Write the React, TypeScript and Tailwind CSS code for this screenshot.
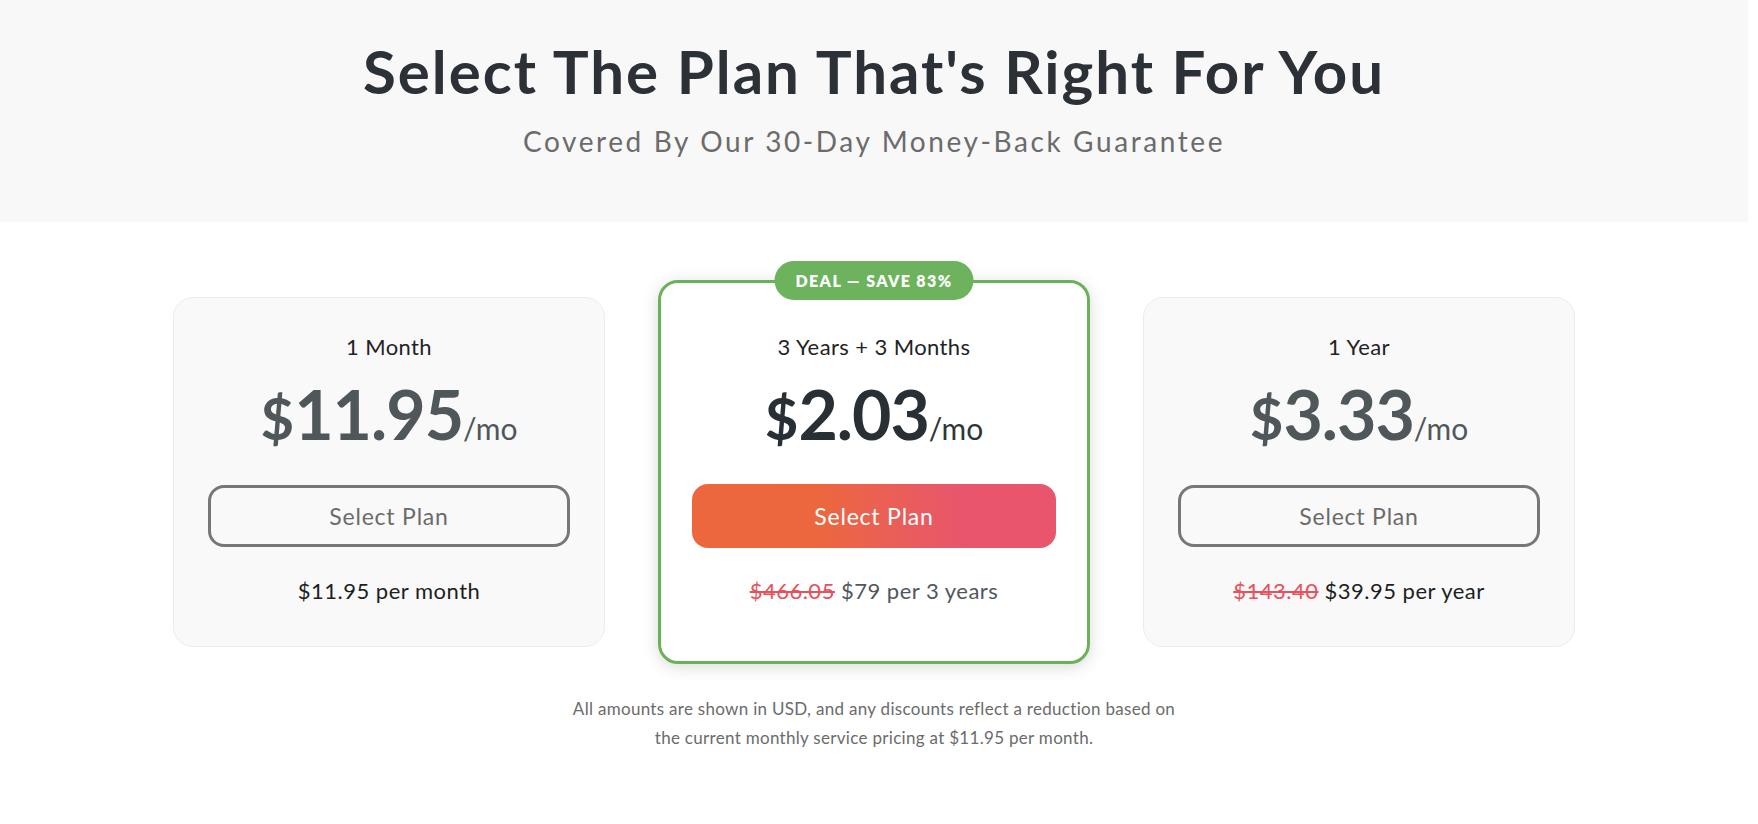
const plans = [
  { id: "1m", label: "1 Month", price: "11.95", old: null, billed: "$11.95 per month", featured: false },
  { id: "3y", label: "3 Years + 3 Months", price: "2.03", old: "$466.05", billed: "$79 per 3 years", featured: true },
  { id: "1y", label: "1 Year", price: "3.33", old: "$143.40", billed: "$39.95 per year", featured: false },
]

type Plan = (typeof plans)[number]

function PlanCard({ plan }: { plan: Plan }) {
  const featured = plan.featured

  return (
    <div
      className={
        featured
          ? "relative w-[432px] rounded-[20px] border-[3px] border-[#6bb15a] bg-white px-[31px] pt-[49px] pb-[55px] shadow-[0_3px_16px_rgba(60,80,60,0.2)]"
          : "relative w-[432px] rounded-[20px] border border-[#ececec] bg-[#f9f9f9] px-[34px] pt-[34px] pb-[40px]"
      }
    >
      {featured && (
        <div className="absolute -top-[22px] left-1/2 flex h-[39px] w-[199px] -translate-x-1/2 items-center justify-center rounded-full bg-[#6db25c] text-[16px] font-extrabold tracking-[1.4px] text-white">
          DEAL — SAVE 83%
        </div>
      )}

      <div className="text-center text-[22px] leading-[30px] tracking-[0.4px] text-[#1f2326]">{plan.label}</div>

      <div className="mt-[12px] flex h-[68px] items-baseline justify-center">
        <span className={featured ? "text-[58px] font-bold text-[#283035]" : "text-[58px] font-bold text-[#50575b]"}>$</span>
        <span
          className={
            featured
              ? "text-[68px] font-bold leading-none tracking-[-1px] text-[#283035]"
              : "text-[68px] font-bold leading-none tracking-[-1px] text-[#50575b]"
          }
        >
          {plan.price}
        </span>
        <span className={featured ? "text-[30px] text-[#2f363b]" : "text-[30px] text-[#50575b]"}>/mo</span>
      </div>

      {featured ? (
        <button className="mt-[42px] h-[64px] w-full rounded-[16px] bg-linear-to-r from-[#ec673d] from-35% to-[#e8556c] to-75% text-[23px] tracking-[0.8px] text-white">
          Select Plan
        </button>
      ) : (
        <button className="mt-[43px] h-[62px] w-full rounded-[16px] border-[3px] border-[#777777] text-[23px] tracking-[0.8px] text-[#6b6b6b]">
          Select Plan
        </button>
      )}

      <div
        className={
          featured
            ? "mt-[28px] text-center text-[22px] leading-[30px] tracking-[0.5px]"
            : "mt-[29px] text-center text-[22px] leading-[30px] tracking-[0.5px]"
        }
      >
        {plan.old && <span className="mr-[6px] text-[#e8505b] line-through">{plan.old}</span>}
        <span className={featured ? "text-[#50575b]" : "text-[#1c1f22]"}>{plan.billed}</span>
      </div>
    </div>
  )
}

export default function App() {
  return (
    <div className="min-h-screen bg-white pr-[10px] font-['Lato',sans-serif]">
      <header className="h-[222px] bg-[#f8f8f8] pt-[36px] text-center">
        <h1 className="text-[60px] font-bold leading-[70px] tracking-[2px] text-[#2b3136]">Select The Plan That's Right For You</h1>
        <p className="mt-[19px] text-[28px] leading-[32px] tracking-[2.6px] text-[#6b6b6b]">Covered By Our 30-Day Money-Back Guarantee</p>
      </header>

      <section className="mt-[58px] flex items-center justify-center gap-[53px]">
        {plans.map((plan) => (
          <PlanCard key={plan.id} plan={plan} />
        ))}
      </section>

      <p className="mt-[30px] text-center text-[17px] leading-[29px] tracking-[0.3px] text-[#6b6b6b]">
        All amounts are shown in USD, and any discounts reflect a reduction based on
        <br />
        the current monthly service pricing at $11.95 per month.
      </p>
    </div>
  )
}
